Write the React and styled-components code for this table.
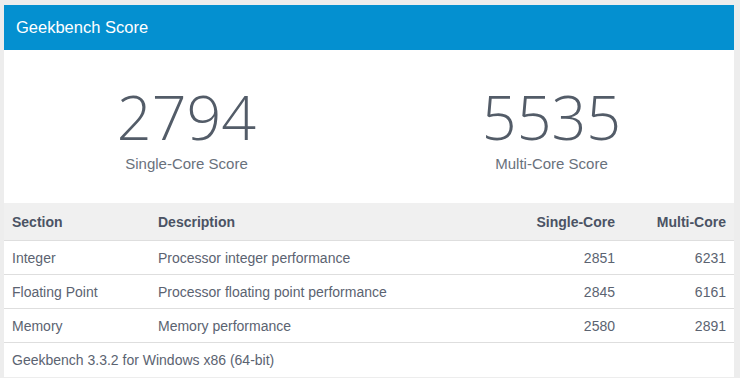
import React from 'react';
import styled, { createGlobalStyle } from 'styled-components';

const GlobalStyle = createGlobalStyle`
  html, body {
    margin: 0;
    padding: 0;
    background: #ededed;
  }
  body {
    font-family: "Liberation Sans", Arial, sans-serif;
  }
`;

const Card = styled.div`
  margin: 5px 6px 2px 4px;
  background: #fff;
`;

const Header = styled.div`
  height: 45px;
  background: #0490d0;
  color: #fff;
  font-size: 16.5px;
  display: flex;
  align-items: center;
  padding-left: 12px;
`;

const Scores = styled.div`
  display: grid;
  grid-template-columns: 1fr 1fr;
  height: 153px;
`;

const ScoreBox = styled.div`
  display: flex;
  flex-direction: column;
  align-items: center;
  padding-top: 36px;
`;

const Big = styled.div`
  font-family: "Open Sans", sans-serif;
  font-weight: 300;
  font-size: 61px;
  line-height: 62px;
  color: #535c68;
`;

const Label = styled.div`
  font-size: 15px;
  line-height: 18px;
  color: #69717c;
  margin-top: 7px;
`;

const Row = styled.div`
  display: grid;
  grid-template-columns: 146px 362px 111px 111px;
  height: ${p => (p.$head ? 38 : 34)}px;
  background: ${p => (p.$head ? '#f0f0f0' : '#fff')};
  border-bottom: 1px solid #dedede;
  font-size: 14px;
  font-weight: ${p => (p.$head ? 'bold' : 'normal')};
  color: ${p => (p.$head ? '#4b5364' : '#5b6371')};
  box-sizing: border-box;
`;

const Cell = styled.div`
  display: flex;
  align-items: center;
  justify-content: ${p => (p.$right ? 'flex-end' : 'flex-start')};
  padding: 0 8px;
`;

const Footer = styled.div`
  height: 34px;
  display: flex;
  align-items: center;
  padding-left: 8px;
  font-size: 14px;
  color: #5b6371;
`;

const rows = [
  ['Integer', 'Processor integer performance', 2851, 6231],
  ['Floating Point', 'Processor floating point performance', 2845, 6161],
  ['Memory', 'Memory performance', 2580, 2891],
];

const App = () => (
  <>
    <GlobalStyle />
    <Card>
      <Header>Geekbench Score</Header>
      <Scores>
        <ScoreBox>
          <Big>2794</Big>
          <Label>Single-Core Score</Label>
        </ScoreBox>
        <ScoreBox>
          <Big>5535</Big>
          <Label>Multi-Core Score</Label>
        </ScoreBox>
      </Scores>
      <Row $head>
        <Cell>Section</Cell>
        <Cell>Description</Cell>
        <Cell $right>Single-Core</Cell>
        <Cell $right>Multi-Core</Cell>
      </Row>
      {rows.map(r => (
        <Row key={r[0]}>
          <Cell>{r[0]}</Cell>
          <Cell>{r[1]}</Cell>
          <Cell $right>{r[2]}</Cell>
          <Cell $right>{r[3]}</Cell>
        </Row>
      ))}
      <Footer>Geekbench 3.3.2 for Windows x86 (64-bit)</Footer>
    </Card>
  </>
);

export default App;
